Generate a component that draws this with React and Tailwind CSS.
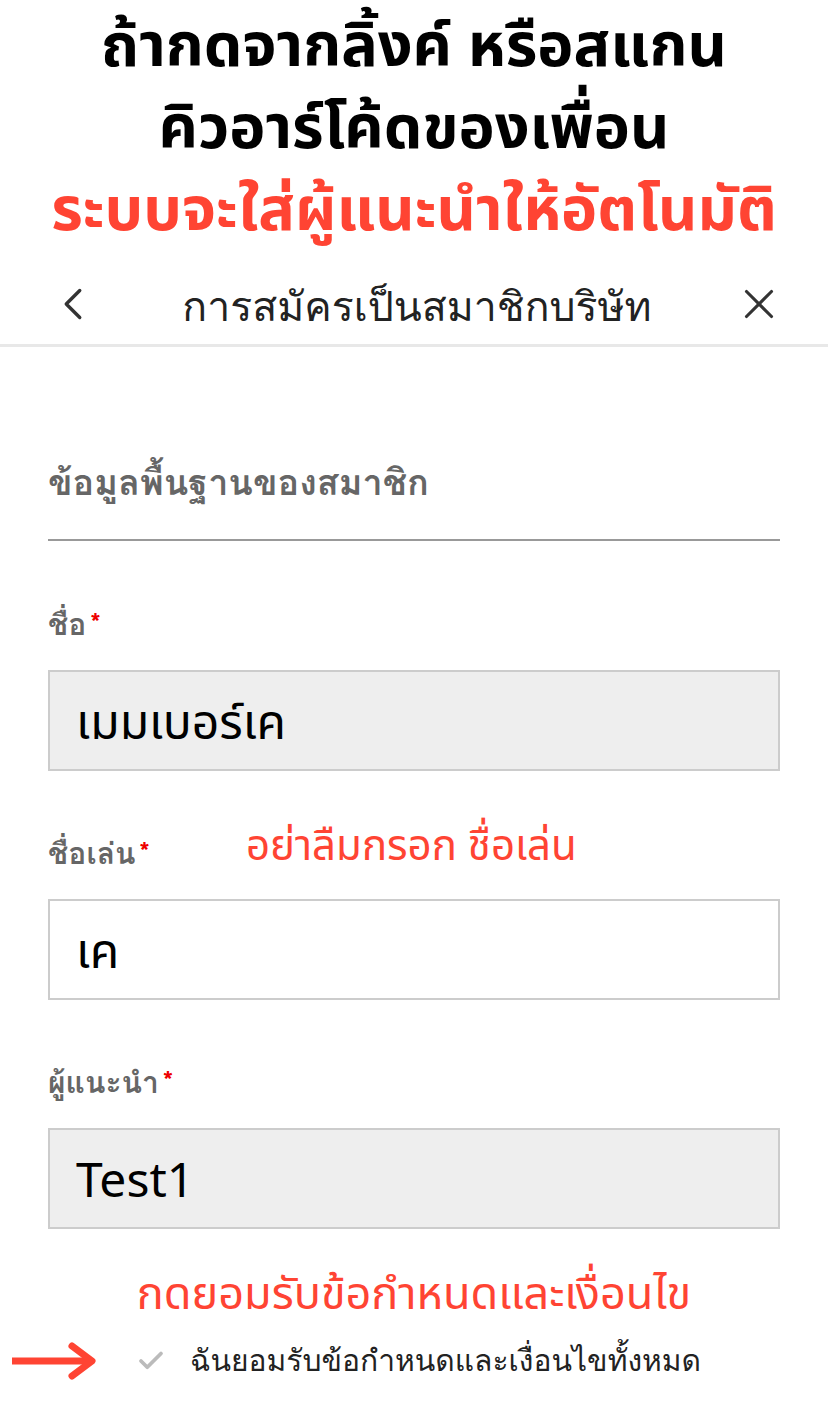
import { ChevronLeft, X, Check } from 'lucide-react';

const thai = { fontFamily: '"Noto Sans", "Noto Sans Thai", "DejaVu Sans", sans-serif' };
const looped = { fontFamily: '"Loma", "Garuda", "Noto Sans Thai Looped", "Noto Sans", sans-serif' };

function Label({ text }) {
  return (
    <div className="flex items-start text-[30px] font-bold text-[#666] leading-none" style={looped}>
      <span>{text}</span>
      <span className="text-[#e00] text-[26px] ml-1">*</span>
    </div>
  );
}

export default function App() {
  return (
    <div className="w-[828px] h-[1418px] bg-white overflow-hidden" style={thai}>
      {/* Banner */}
      <div className="pt-[2px] text-center font-bold text-[61px] leading-[82px]">
        <div className="text-black">ถ้ากดจากลิ้งค์ หรือสแกน</div>
        <div className="text-black">คิวอาร์โค้ดของเพื่อน</div>
        <div className="text-[#ff4433]">ระบบจะใส่ผู้แนะนำให้อัตโนมัติ</div>
      </div>

      {/* Nav bar */}
      <div className="mt-[16px] h-[83px] flex items-center justify-between pl-[46px] pr-[44px] border-b-[3px] border-[#e8e8e8]">
        <ChevronLeft className="w-[54px] h-[54px] text-[#333]" strokeWidth={1.5} />
        <div className="pt-[6px] text-[41px] text-[#222]" style={looped}>การสมัครเป็นสมาชิกบริษัท</div>
        <X className="w-[50px] h-[50px] text-[#333]" strokeWidth={1.5} />
      </div>

      <div className="px-[48px]">
        <div className="pt-[118px] pb-[38px] border-b-2 border-[#999] text-[36px] font-bold text-[#666] leading-none" style={looped}>
          ข้อมูลพื้นฐานของสมาชิก
        </div>

        <div className="mt-[69px]"><Label text="ชื่อ" /></div>
        <div className="mt-[30px] h-[101px] bg-[#eeeeee] border-2 border-[#ccc] flex items-center px-[26px] text-[48px] text-black">
          เมมเบอร์เค
        </div>

        <div className="mt-[52px] flex items-end">
          <div className="w-[198px]"><Label text="ชื่อเล่น" /></div>
          <div className="mb-[4px] text-[42px] text-[#ff4433] leading-none">อย่าลืมกรอก ชื่อเล่น</div>
        </div>
        <div className="mt-[30px] h-[101px] bg-white border-2 border-[#ccc] flex items-center px-[26px] text-[48px] text-black">
          เค
        </div>

        <div className="mt-[68px]"><Label text="ผู้แนะนำ" /></div>
        <div className="mt-[30px] h-[101px] bg-[#eeeeee] border-2 border-[#ccc] flex items-center px-[26px] text-[48px] text-black">
          Test1
        </div>

        <div className="mt-[40px] text-center text-[45px] text-[#ff4433] leading-none">
          กดยอมรับข้อกำหนดและเงื่อนไข
        </div>
      </div>

      <div className="mt-[24px] flex items-center pl-[10px]">
        <svg width="90" height="40" viewBox="0 0 90 40">
          <path d="M2 20 H78" stroke="#ff4433" strokeWidth="7" />
          <path d="M62 5 L82 20 L62 35" fill="none" stroke="#ff4433" strokeWidth="7" strokeLinecap="round" strokeLinejoin="round" />
        </svg>
        <Check className="ml-[36px] w-[30px] h-[30px] text-[#bbb]" strokeWidth={3} />
        <div className="ml-[24px] text-[30px] text-[#222]" style={looped}>ฉันยอมรับข้อกำหนดและเงื่อนไขทั้งหมด</div>
      </div>
    </div>
  );
}
